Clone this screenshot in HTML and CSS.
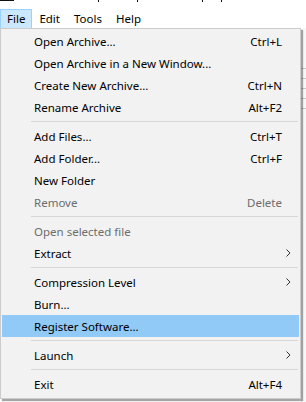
FILE: index.html
```html
<!DOCTYPE html>
<html lang="en">

<head>
    <meta charset="UTF-8">
    <title>File menu</title>
    <link rel="stylesheet" href="styles.css">
</head>

<body>
    <!-- what is left of the title bar above the menu bar -->
    <div class="titlebar">
        <span class="mark wide"></span>
        <span class="mark m1"></span>
        <span class="mark m2"></span>
        <span class="mark m3"></span>
        <span class="mark m4"></span>
    </div>

    <div class="menubar">
        <div class="menubar-item open">File</div>
        <div class="menubar-item">Edit</div>
        <div class="menubar-item">Tools</div>
        <div class="menubar-item">Help</div>
    </div>

    <div class="desk">
        <div class="menu">
            <div class="item"><span class="label">Open Archive...</span><span class="key">Ctrl+L</span></div>
            <div class="item"><span class="label">Open Archive in a New Window...</span></div>
            <div class="item"><span class="label">Create New Archive...</span><span class="key">Ctrl+N</span></div>
            <div class="item"><span class="label">Rename Archive</span><span class="key">Alt+F2</span></div>
            <div class="separator"></div>
            <div class="item"><span class="label">Add Files...</span><span class="key">Ctrl+T</span></div>
            <div class="item"><span class="label">Add Folder...</span><span class="key">Ctrl+F</span></div>
            <div class="item"><span class="label">New Folder</span></div>
            <div class="item disabled"><span class="label">Remove</span><span class="key">Delete</span></div>
            <div class="separator"></div>
            <div class="item disabled"><span class="label">Open selected file</span></div>
            <div class="item"><span class="label">Extract</span>
                <svg class="arrow" width="5" height="8" viewBox="0 0 5 8"><path d="M0.5 0.5 L4 4 L0.5 7.5" fill="none" stroke="#333" stroke-width="1"/></svg>
            </div>
            <div class="separator"></div>
            <div class="item"><span class="label">Compression Level</span>
                <svg class="arrow" width="5" height="8" viewBox="0 0 5 8"><path d="M0.5 0.5 L4 4 L0.5 7.5" fill="none" stroke="#333" stroke-width="1"/></svg>
            </div>
            <div class="item"><span class="label">Burn...</span></div>
            <div class="item active"><span class="label">Register Software...</span></div>
            <div class="separator"></div>
            <div class="item"><span class="label">Launch</span>
                <svg class="arrow" width="5" height="8" viewBox="0 0 5 8"><path d="M0.5 0.5 L4 4 L0.5 7.5" fill="none" stroke="#333" stroke-width="1"/></svg>
            </div>
            <div class="separator"></div>
            <div class="item"><span class="label">Exit</span><span class="key">Alt+F4</span></div>
        </div>
        <div class="backdrop">
            <div class="row"></div>
            <div class="row"></div>
            <div class="row"></div>
            <div class="row"></div>
            <div class="row"></div>
        </div>
    </div>
</body>

</html>
```

FILE: styles.css
```css
* {
    box-sizing: border-box;
}

body {
    margin: 0;
    width: 306px;
    height: 402px;
    overflow: hidden;
    background-color: #fff;
    font-family: "Noto Sans", "Open Sans", sans-serif;
    font-size: 11.5px;
    color: #000;
}

.titlebar {
    position: relative;
    height: 9px;
}

.mark {
    position: absolute;
    top: 0;
    width: 1px;
    height: 2px;
    background-color: #111;
}

.mark.wide {
    left: 0;
    width: 14px;
    height: 1px;
}

.m1 { left: 98px; }
.m2 { left: 137px; }
.m3 { left: 202px; }
.m4 { left: 221px; }

.menubar {
    display: flex;
    height: 19px;
}

.menubar-item {
    height: 21px;
    padding: 0 6px;
    border: 1px solid transparent;
    line-height: 18px;
}

.menubar-item.open {
    background-color: #cce8ff;
    border-color: #99d1ff;
}

.desk {
    display: flex;
    align-items: flex-start;
}

.menu {
    position: relative;
    z-index: 1;
    width: 301px;
    padding: 1px 0 3px 0;
    background-color: #f2f2f2;
    border: 1px solid #cccccc;
    box-shadow: 2px 2px 1px rgba(0, 0, 0, 0.35);
}

.item {
    display: flex;
    align-items: center;
    height: 22px;
    margin: 0 1px;
    padding: 0 17px 0 32px;
}

.item .label {
    flex: 1;
}

.item.disabled {
    color: #6d6d6d;
}

.item.active {
    background-color: #91c9f7;
}

.arrow {
    margin-right: -9px;
}

.separator {
    height: 1px;
    margin: 3px 2px 3px 30px;
    background-color: #d7d7d7;
}

.backdrop {
    flex: 1;
    height: 380px;
    padding-top: 40px;
    background-color: #f7f7f7;
}

.row {
    height: 1px;
    margin-bottom: 9px;
    background-color: #c8c8c8;
}
```
